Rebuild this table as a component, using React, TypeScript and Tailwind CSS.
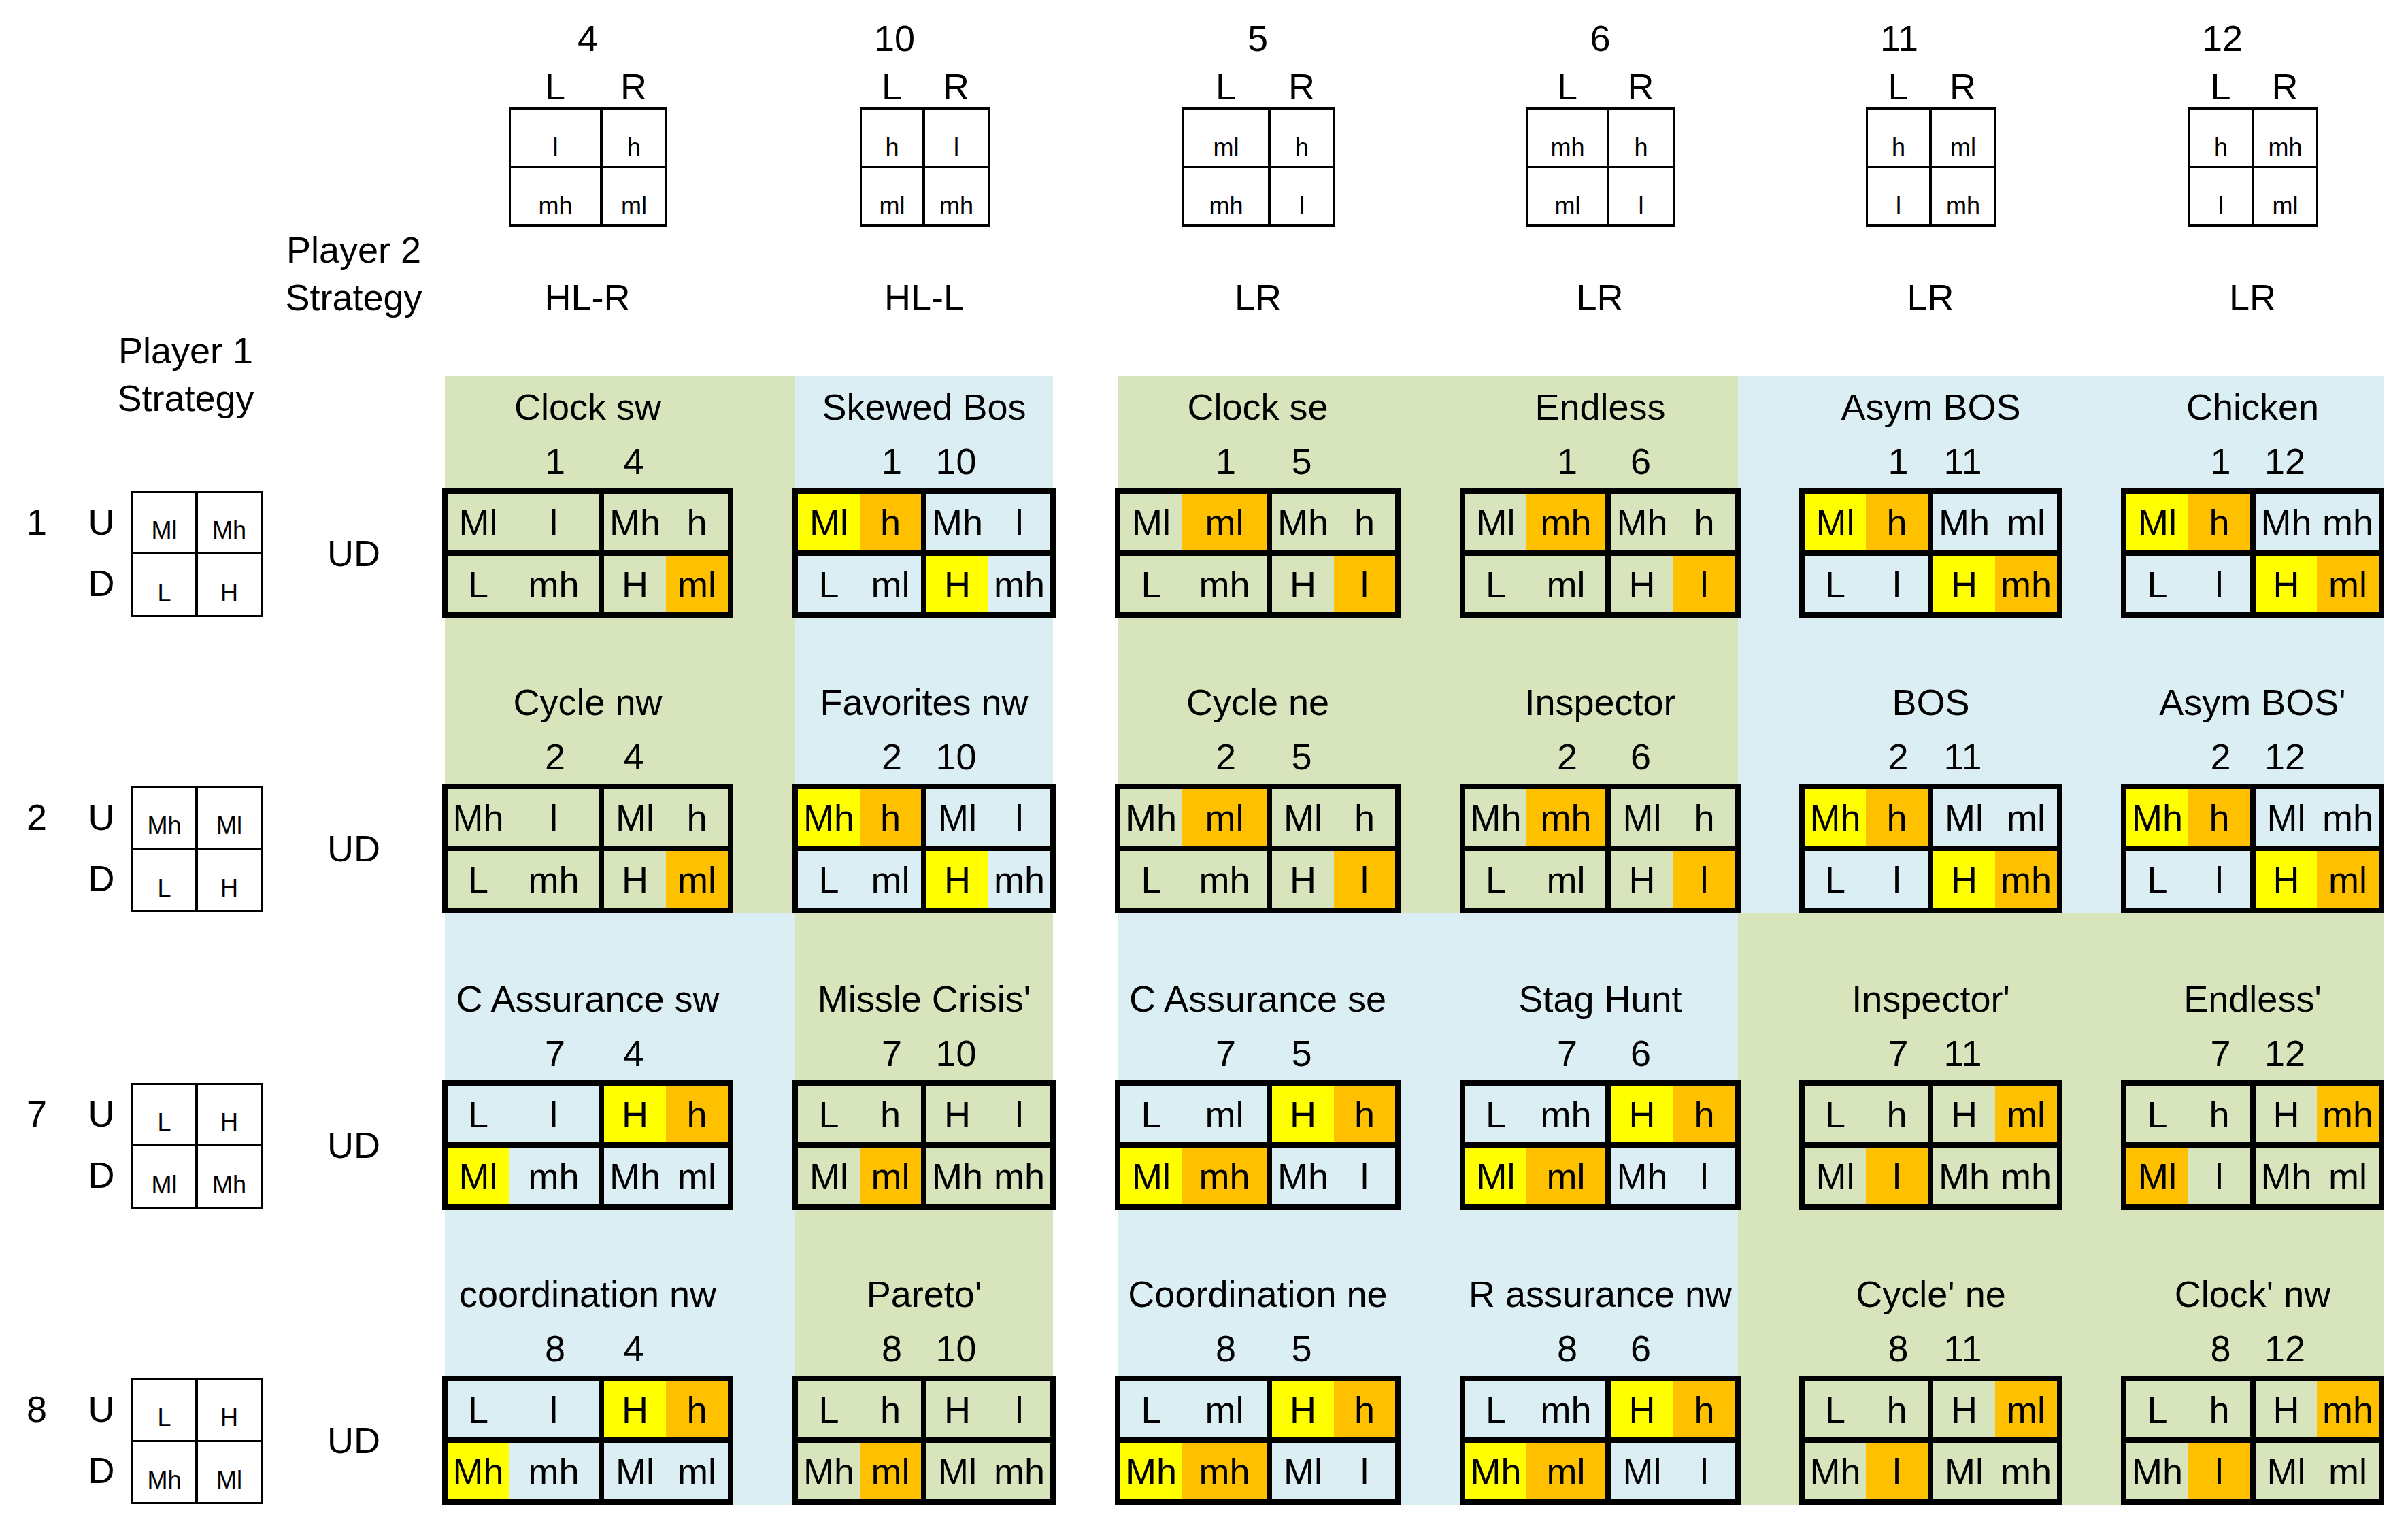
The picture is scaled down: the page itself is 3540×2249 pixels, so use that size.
import React from 'react';

type G = { t: string; p: string; q: string; u: string[]; uh: number[]; d: string[]; dh: number[] };

const mk = (t: string, p: string, q: string, u: string, uh: string, d: string, dh: string): G => ({
  t,
  p,
  q,
  u: u.split(' '),
  uh: uh.split('').map(Number),
  d: d.split(' '),
  dh: dh.split('').map(Number),
});

const ROWS: G[][] = [
  [
    mk('Clock sw', '1', '4', 'Ml l Mh h', '0000', 'L mh H ml', '0002'),
    mk('Skewed Bos', '1', '10', 'Ml h Mh l', '1200', 'L ml H mh', '0010'),
    mk('Clock se', '1', '5', 'Ml ml Mh h', '0200', 'L mh H l', '0002'),
    mk('Endless', '1', '6', 'Ml mh Mh h', '0200', 'L ml H l', '0002'),
    mk('Asym BOS', '1', '11', 'Ml h Mh ml', '1200', 'L l H mh', '0012'),
    mk('Chicken', '1', '12', 'Ml h Mh mh', '1200', 'L l H ml', '0012'),
  ],
  [
    mk('Cycle nw', '2', '4', 'Mh l Ml h', '0000', 'L mh H ml', '0002'),
    mk('Favorites nw', '2', '10', 'Mh h Ml l', '1200', 'L ml H mh', '0010'),
    mk('Cycle ne', '2', '5', 'Mh ml Ml h', '0200', 'L mh H l', '0002'),
    mk('Inspector', '2', '6', 'Mh mh Ml h', '0200', 'L ml H l', '0002'),
    mk('BOS', '2', '11', 'Mh h Ml ml', '1200', 'L l H mh', '0012'),
    mk("Asym BOS'", '2', '12', 'Mh h Ml mh', '1200', 'L l H ml', '0012'),
  ],
  [
    mk('C Assurance sw', '7', '4', 'L l H h', '0012', 'Ml mh Mh ml', '1000'),
    mk("Missle Crisis'", '7', '10', 'L h H l', '0000', 'Ml ml Mh mh', '0200'),
    mk('C Assurance se', '7', '5', 'L ml H h', '0012', 'Ml mh Mh l', '1200'),
    mk('Stag Hunt', '7', '6', 'L mh H h', '0012', 'Ml ml Mh l', '1200'),
    mk("Inspector'", '7', '11', 'L h H ml', '0002', 'Ml l Mh mh', '0200'),
    mk("Endless'", '7', '12', 'L h H mh', '0002', 'Ml l Mh ml', '2000'),
  ],
  [
    mk('coordination nw', '8', '4', 'L l H h', '0012', 'Mh mh Ml ml', '1000'),
    mk("Pareto'", '8', '10', 'L h H l', '0000', 'Mh ml Ml mh', '0200'),
    mk('Coordination ne', '8', '5', 'L ml H h', '0012', 'Mh mh Ml l', '1200'),
    mk('R assurance nw', '8', '6', 'L mh H h', '0012', 'Mh ml Ml l', '1200'),
    mk("Cycle' ne", '8', '11', 'L h H ml', '0002', 'Mh l Ml mh', '0200'),
    mk("Clock' nw", '8', '12', 'L h H mh', '0002', 'Mh l Ml ml', '0200'),
  ],
];

type Geo = {
  full: string[];
  inner: string[];
  total: string;
  mat: string;
  numW: string;
  bc: string;
  sw: string;
  sl: string;
};

const GEO: Geo[] = [
  {
    full: ['w-[94px]', 'w-[136px]', 'w-[95px]', 'w-[95px]'],
    inner: ['w-[90px]', 'w-[132px]', 'w-[91px]', 'w-[91px]'],
    total: 'w-[420px]',
    mat: 'w-[428px]',
    numW: 'w-[422px]',
    bc: 'w-[231px]',
    sw: 'w-[233px]',
    sl: 'w-[135px]',
  },
  {
    full: ['w-[95px]', 'w-[94px]', 'w-[95px]', 'w-[95px]'],
    inner: ['w-[91px]', 'w-[90px]', 'w-[91px]', 'w-[91px]'],
    total: 'w-[379px]',
    mat: 'w-[387px]',
    numW: 'w-[292px]',
    bc: 'w-[189px]',
    sw: 'w-[191px]',
    sl: 'w-[93px]',
  },
  {
    full: ['w-[95px]', 'w-[128px]', 'w-[95px]', 'w-[94px]'],
    inner: ['w-[91px]', 'w-[124px]', 'w-[91px]', 'w-[90px]'],
    total: 'w-[412px]',
    mat: 'w-[420px]',
    numW: 'w-[414px]',
    bc: 'w-[223px]',
    sw: 'w-[225px]',
    sl: 'w-[127px]',
  },
  {
    full: ['w-[94px]', 'w-[120px]', 'w-[96px]', 'w-[95px]'],
    inner: ['w-[90px]', 'w-[116px]', 'w-[92px]', 'w-[91px]'],
    total: 'w-[405px]',
    mat: 'w-[413px]',
    numW: 'w-[406px]',
    bc: 'w-[216px]',
    sw: 'w-[218px]',
    sl: 'w-[119px]',
  },
  {
    full: ['w-[94px]', 'w-[95px]', 'w-[95px]', 'w-[95px]'],
    inner: ['w-[90px]', 'w-[91px]', 'w-[91px]', 'w-[91px]'],
    total: 'w-[379px]',
    mat: 'w-[387px]',
    numW: 'w-[286px]',
    bc: 'w-[190px]',
    sw: 'w-[192px]',
    sl: 'w-[94px]',
  },
  {
    full: ['w-[95px]', 'w-[95px]', 'w-[94px]', 'w-[95px]'],
    inner: ['w-[91px]', 'w-[91px]', 'w-[90px]', 'w-[91px]'],
    total: 'w-[379px]',
    mat: 'w-[387px]',
    numW: 'w-[290px]',
    bc: 'w-[189px]',
    sw: 'w-[191px]',
    sl: 'w-[94px]',
  },
];

const HEAD = [
  { n: '4', m: ['l', 'h', 'mh', 'ml'], lab: 'HL-R' },
  { n: '10', m: ['h', 'l', 'ml', 'mh'], lab: 'HL-L' },
  { n: '5', m: ['ml', 'h', 'mh', 'l'], lab: 'LR' },
  { n: '6', m: ['mh', 'h', 'ml', 'l'], lab: 'LR' },
  { n: '11', m: ['h', 'ml', 'l', 'mh'], lab: 'LR' },
  { n: '12', m: ['h', 'mh', 'l', 'ml'], lab: 'LR' },
];

const LEFT = [
  { n: '1', m: ['Ml', 'Mh', 'L', 'H'] },
  { n: '2', m: ['Mh', 'Ml', 'L', 'H'] },
  { n: '7', m: ['L', 'H', 'Ml', 'Mh'] },
  { n: '8', m: ['L', 'H', 'Mh', 'Ml'] },
];

const HL = ['', 'bg-[#ffff00]', 'bg-[#ffc000]'];
const GREEN = 'bg-[#d8e4bc]';
const BLUE = 'bg-[#daeef3]';

function GameHeader({ gi }: { gi: number }) {
  const g = GEO[gi];
  const h = HEAD[gi];
  return (
    <div className={`${g.total} shrink-0 flex flex-col`}>
      <div className="h-[80px] flex items-center">
        <div className={`${g.numW} text-center`}>{h.n}</div>
      </div>
      <div className="h-[62px] flex items-center">
        <div className={`${g.full[0]} shrink-0`} />
        <div className={`${g.full[1]} shrink-0 text-center`}>L</div>
        <div className={`${g.full[2]} shrink-0 text-center`}>R</div>
      </div>
      <div className="h-[175px] flex">
        <div className={`${g.full[0]} shrink-0`} />
        <div className={`${g.sw} shrink-0 h-full border-[3px] border-black flex flex-col text-[36px]`}>
          <div className="flex flex-1 border-b-[3px] border-black">
            <div className={`${g.sl} shrink-0 border-r-[4px] border-black flex items-end justify-center pb-[9px]`}>{h.m[0]}</div>
            <div className="flex-1 flex items-end justify-center pb-[9px]">{h.m[1]}</div>
          </div>
          <div className="flex flex-1">
            <div className={`${g.sl} shrink-0 border-r-[4px] border-black flex items-end justify-center pb-[9px]`}>{h.m[2]}</div>
            <div className="flex-1 flex items-end justify-center pb-[9px]">{h.m[3]}</div>
          </div>
        </div>
      </div>
      <div className="h-[69px]" />
      <div className="h-[70px] flex items-center">
        <div className={`${g.full[0]} shrink-0`} />
        <div className={`${g.bc} shrink-0 text-center`}>{h.lab}</div>
      </div>
      <div className="h-[81px]" />
    </div>
  );
}

function PayRow({ g, texts, hls }: { g: Geo; texts: string[]; hls: number[] }) {
  return (
    <div className="h-[83px] flex">
      <div className={`${g.inner[0]} ${HL[hls[0]]} shrink-0 h-full flex items-center justify-center`}>{texts[0]}</div>
      <div className={`${g.inner[1]} ${HL[hls[1]]} shrink-0 h-full flex items-center justify-center`}>{texts[1]}</div>
      <div className="w-[8px] shrink-0 h-full bg-black" />
      <div className={`${g.inner[2]} ${HL[hls[2]]} shrink-0 h-full flex items-center justify-center`}>{texts[2]}</div>
      <div className={`${g.inner[3]} ${HL[hls[3]]} shrink-0 h-full flex items-center justify-center`}>{texts[3]}</div>
    </div>
  );
}

function Block({ gi, game }: { gi: number; game: G }) {
  const g = GEO[gi];
  return (
    <div className="flex flex-col">
      <div className="h-[80px] flex items-center justify-center whitespace-nowrap">{game.t}</div>
      <div className="h-[80px] flex items-center">
        <div className={`${g.full[0]} shrink-0`} />
        <div className={`${g.full[1]} shrink-0 text-center`}>{game.p}</div>
        <div className={`${g.full[2]} shrink-0 text-center`}>{game.q}</div>
      </div>
      <div className={`${g.mat} relative -ml-[4px] shrink-0 border-[8px] border-black flex flex-col`}>
        <PayRow g={g} texts={game.u} hls={game.uh} />
        <div className="h-[8px] bg-black" />
        <PayRow g={g} texts={game.d} hls={game.dh} />
      </div>
    </div>
  );
}

function GameCol({ gi, rows, pre }: { gi: number; rows: number[]; pre: string }) {
  const g = GEO[gi];
  return (
    <div className={`${g.total} shrink-0 flex flex-col`}>
      <div className={pre} />
      <Block gi={gi} game={ROWS[rows[0]][gi]} />
      <div className="h-[84px]" />
      <Block gi={gi} game={ROWS[rows[1]][gi]} />
    </div>
  );
}

function Group({ rows, c1, c2, pre, h }: { rows: number[]; c1: string; c2: string; pre: string; h: string }) {
  return (
    <div className={`flex ${h}`}>
      <div className={`w-[515px] shrink-0 ${c1} flex`}>
        <GameCol gi={0} rows={rows} pre={pre} />
      </div>
      <div className={`w-[379px] shrink-0 ${c2} flex`}>
        <GameCol gi={1} rows={rows} pre={pre} />
      </div>
      <div className="w-[95px] shrink-0" />
      <div className={`w-[912px] shrink-0 ${c1} flex`}>
        <GameCol gi={2} rows={rows} pre={pre} />
        <div className="w-[95px] shrink-0" />
        <GameCol gi={3} rows={rows} pre={pre} />
      </div>
      <div className={`w-[950px] shrink-0 ${c2} flex`}>
        <div className="w-[94px] shrink-0" />
        <GameCol gi={4} rows={rows} pre={pre} />
        <div className="w-[94px] shrink-0" />
        <GameCol gi={5} rows={rows} pre={pre} />
      </div>
    </div>
  );
}

function LeftRow({ n, m }: { n: string; m: string[] }) {
  return (
    <div className="flex h-[190px] shrink-0">
      <div className="w-[108px] shrink-0 flex flex-col pt-[4px]">
        <div className="h-[90px] flex items-center justify-center">{n}</div>
      </div>
      <div className="w-[82px] shrink-0 flex flex-col pt-[4px]">
        <div className="h-[90px] flex items-center justify-center">U</div>
        <div className="h-[90px] flex items-center justify-center">D</div>
      </div>
      <div className="ml-[3px] mt-[4px] w-[193px] h-[185px] shrink-0 border-[3px] border-black flex flex-col text-[36px]">
        <div className="h-[90px] flex border-b-[3px] border-black">
          <div className="w-[95px] shrink-0 border-r-[4px] border-black flex items-end justify-center pb-[14px]">{m[0]}</div>
          <div className="flex-1 flex items-end justify-center pb-[14px]">{m[1]}</div>
        </div>
        <div className="flex-1 flex">
          <div className="w-[95px] shrink-0 border-r-[4px] border-black flex items-end justify-center pb-[14px]">{m[2]}</div>
          <div className="flex-1 flex items-end justify-center pb-[14px]">{m[3]}</div>
        </div>
      </div>
      <div className="w-[268px] shrink-0 flex items-center justify-center">UD</div>
    </div>
  );
}

export default function App() {
  return (
    <div className="w-[3540px] h-[2249px] bg-white text-black flex font-['Liberation_Sans',Arial,sans-serif] text-[54px] leading-none overflow-hidden">
      <div className="w-[654px] shrink-0 flex flex-col">
        <div className="h-[332px] shrink-0" />
        <div className="ml-[420px] w-[200px] flex flex-col items-center leading-[70px] whitespace-nowrap">
          <div>Player 2</div>
          <div>Strategy</div>
        </div>
        <div className="h-[8px] shrink-0" />
        <div className="ml-[173px] w-[200px] flex flex-col items-center leading-[70px] whitespace-nowrap">
          <div>Player 1</div>
          <div>Strategy</div>
        </div>
        <div className="h-[98px] shrink-0" />
        <LeftRow n={LEFT[0].n} m={LEFT[0].m} />
        <div className="h-[244px] shrink-0" />
        <LeftRow n={LEFT[1].n} m={LEFT[1].m} />
        <div className="h-[246px] shrink-0" />
        <LeftRow n={LEFT[2].n} m={LEFT[2].m} />
        <div className="h-[244px] shrink-0" />
        <LeftRow n={LEFT[3].n} m={LEFT[3].m} />
      </div>
      <div className="flex flex-col shrink-0">
        <div className="flex pt-[16px]">
          <GameHeader gi={0} />
          <div className="w-[95px] shrink-0" />
          <GameHeader gi={1} />
          <div className="w-[95px] shrink-0" />
          <GameHeader gi={2} />
          <div className="w-[95px] shrink-0" />
          <GameHeader gi={3} />
          <div className="w-[94px] shrink-0" />
          <GameHeader gi={4} />
          <div className="w-[94px] shrink-0" />
          <GameHeader gi={5} />
        </div>
        <Group rows={[0, 1]} c1={GREEN} c2={BLUE} pre="h-[5px]" h="h-[789px]" />
        <Group rows={[2, 3]} c1={BLUE} c2={GREEN} pre="h-[86px]" h="h-[870px]" />
      </div>
    </div>
  );
}
